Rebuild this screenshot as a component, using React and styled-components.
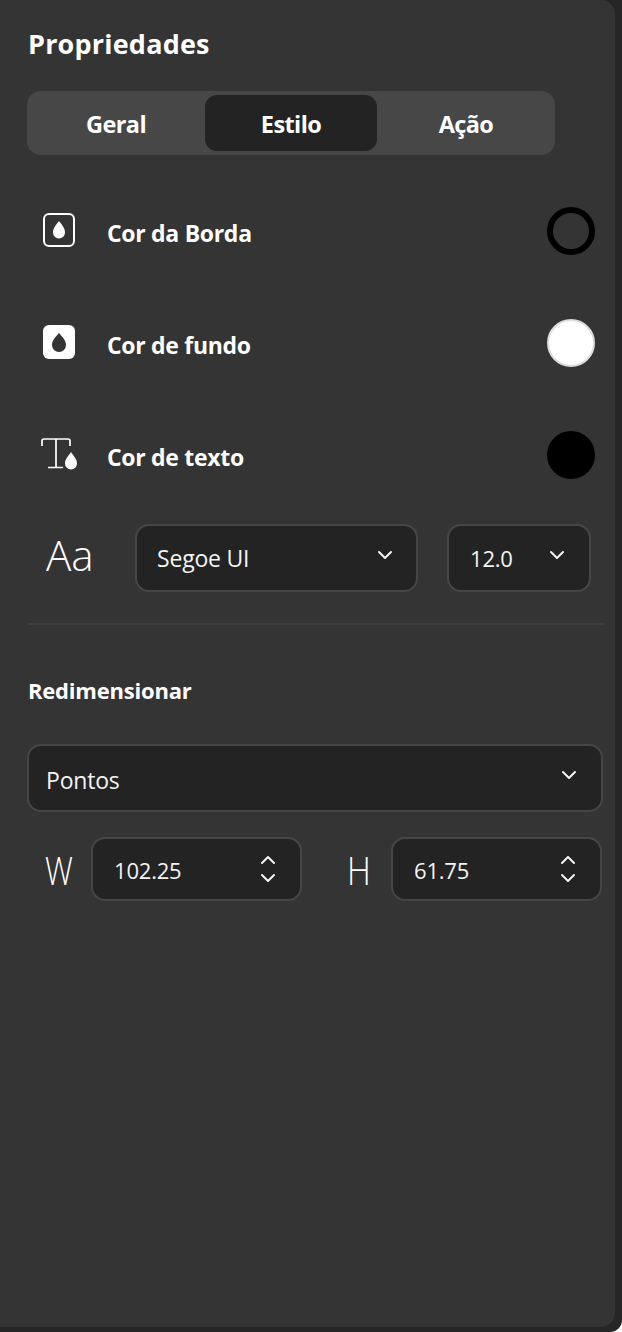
import React from "react";
import styled, { createGlobalStyle } from "styled-components";

const GlobalStyle = createGlobalStyle`
  html, body {
    margin: 0;
    padding: 0;
    background: #fff;
  }
  body {
    width: 622px;
    height: 1332px;
    overflow: hidden;
    font-family: "Open Sans", "Noto Sans", sans-serif;
    color: #fff;
  }
`;

const Frame = styled.div`
  width: 622px;
  height: 1332px;
  background: #262626;
  border-bottom-right-radius: 12px;
`;

const Panel = styled.div`
  box-sizing: border-box;
  width: 615px;
  height: 1327px;
  padding: 26px 12px 0 28px;
  background: #343434;
  border-bottom-right-radius: 14px;
  border-top-right-radius: 14px;
`;

const Title = styled.h1`
  margin: 0;
  height: 36px;
  font-size: 27px;
  line-height: 36px;
  font-weight: 700;
  letter-spacing: 0.2px;
`;

const Tabs = styled.div`
  box-sizing: border-box;
  display: flex;
  align-items: center;
  width: 528px;
  height: 64px;
  margin: 29px 0 0 -1px;
  background: #474747;
  border-radius: 14px;
`;

const Tab = styled.div`
  display: flex;
  align-items: center;
  justify-content: center;
  flex: ${(p) => p.$grow};
  height: 56px;
  padding-top: 1px;
  box-sizing: border-box;
  background: ${(p) => (p.$active ? "#232323" : "transparent")};
  border-radius: 12px;
  font-size: 23.5px;
  font-weight: 700;
  letter-spacing: -0.6px;
`;

const ColorList = styled.div`
  display: flex;
  flex-direction: column;
  gap: 64px;
  margin-top: 52px;
`;

const ColorRow = styled.div`
  display: flex;
  align-items: center;
  height: 48px;
`;

const IconSlot = styled.div`
  display: flex;
  align-items: center;
  justify-content: center;
  width: 62px;
  margin-bottom: 2px;
  svg {
    display: block;
  }
`;

const RowLabel = styled.span`
  margin-left: 17px;
  padding-top: 3px;
  flex: 1;
  font-size: 23px;
  font-weight: 700;
  letter-spacing: -0.3px;
`;

const Swatch = styled.div`
  box-sizing: border-box;
  width: 48px;
  height: 48px;
  margin-right: 8px;
  border-radius: 50%;
  background: ${(p) => p.$fill};
  border: ${(p) => p.$border};
`;

const FontRow = styled.div`
  display: flex;
  align-items: center;
  margin-top: 45px;
`;

const LightGlyph = styled.span`
  flex: none;
  width: ${(p) => p.$width}px;
  margin-left: ${(p) => p.$indent}px;
  margin-bottom: ${(p) => p.$raise || 0}px;
  font-weight: 300;
  font-size: ${(p) => p.$size}px;
  line-height: 1;
  transform: scaleX(${(p) => p.$squeeze || 1});
  transform-origin: left center;
`;

const Field = styled.div`
  box-sizing: border-box;
  display: flex;
  align-items: center;
  justify-content: space-between;
  flex: none;
  width: ${(p) => p.$width}px;
  height: ${(p) => p.$height}px;
  margin-left: ${(p) => p.$gap || 0}px;
  padding: 0 ${(p) => p.$right}px 0 ${(p) => p.$left}px;
  background: #232323;
  border: 2px solid #464646;
  border-radius: 14px;
  font-size: ${(p) => p.$size || 23}px;
  font-weight: 400;
  letter-spacing: -0.2px;
  color: #f4f4f4;
`;

const FieldText = styled.span`
  padding-top: ${(p) => p.$drop || 0}px;
`;

const WideField = styled(Field)`
  margin-top: 39px;
`;

const Divider = styled.div`
  width: 577px;
  height: 2px;
  margin-top: 31px;
  background: #3f3f3f;
`;

const SectionTitle = styled.h2`
  margin: 50px 0 0;
  height: 30px;
  font-size: 22px;
  line-height: 30px;
  font-weight: 700;
  letter-spacing: -0.2px;
`;

const SizeRow = styled.div`
  display: flex;
  align-items: center;
  margin-top: 25px;
`;

const Stepper = styled.div`
  display: flex;
  flex-direction: column;
  gap: 8px;
`;

const Chevron = styled.svg`
  display: block;
  flex: none;
  fill: none;
  stroke: #f4f4f4;
  stroke-width: 2;
  stroke-linecap: round;
  stroke-linejoin: round;
  transform: ${(p) => (p.$up ? "rotate(180deg)" : "none")};
  margin-top: ${(p) => p.$lift || 0}px;
`;

const ChevronDown = ({ up, lift }) => (
  <Chevron width="16" height="10" viewBox="0 0 16 10" $up={up} $lift={lift}>
    <path d="M2 2 L8 8 L14 2" />
  </Chevron>
);

const BorderDropIcon = () => (
  <svg width="32" height="34" viewBox="0 0 32 34">
    <rect x="1" y="1" width="30" height="32" rx="5" fill="none" stroke="#fff" strokeWidth="2" />
    <path d="M16 8 C19 12 22 15 22 19.5 A6 6 0 0 1 10 19.5 C10 15 13 12 16 8 Z" fill="#fff" />
  </svg>
);

const FillDropIcon = () => (
  <svg width="32" height="34" viewBox="0 0 32 34">
    <rect width="32" height="34" rx="6" fill="#fff" />
    <path d="M16 8 C19.5 12 23 15.5 23 20 A7 7 0 0 1 9 20 C9 15.5 12.5 12 16 8 Z" fill="#343434" />
  </svg>
);

const TextDropIcon = () => (
  <svg width="36" height="32" viewBox="0 0 36 32">
    <path
      d="M1 8 V3 Q1 1 3 1 H27 Q29 1 29 3 V8 M15 1 V29.5 M7 29.5 H22"
      fill="none"
      stroke="#fff"
      strokeWidth="1.7"
    />
    <path d="M30 14 C32.5 18 36 21 36 25.5 A6 6 0 0 1 24 25.5 C24 21 27.5 18 30 14 Z" fill="#fff" />
  </svg>
);

const colors = [
  { label: "Cor da Borda", icon: <BorderDropIcon />, fill: "transparent", border: "6px solid #000" },
  { label: "Cor de fundo", icon: <FillDropIcon />, fill: "#fff", border: "2px solid #dcdcdc" },
  { label: "Cor de texto", icon: <TextDropIcon />, fill: "#000", border: "none" },
];

export default function App() {
  return (
    <Frame>
      <GlobalStyle />
      <Panel>
        <Title>Propriedades</Title>
        <Tabs>
          <Tab $grow="178">Geral</Tab>
          <Tab $grow="172" $active>
            Estilo
          </Tab>
          <Tab $grow="178">Ação</Tab>
        </Tabs>
        <ColorList>
          {colors.map((c) => (
            <ColorRow key={c.label}>
              <IconSlot>{c.icon}</IconSlot>
              <RowLabel>{c.label}</RowLabel>
              <Swatch $fill={c.fill} $border={c.border} />
            </ColorRow>
          ))}
        </ColorList>
        <FontRow>
          <LightGlyph $size={43} $width={89} $indent={18} $squeeze={0.98} $raise={8}>
            Aa
          </LightGlyph>
          <Field $width={283} $height={68} $left={20} $right={23}>
            <FieldText>Segoe UI</FieldText>
            <ChevronDown lift={-6} />
          </Field>
          <Field $width={144} $height={68} $gap={29} $left={21} $right={24} $size={22}>
            <FieldText>12.0</FieldText>
            <ChevronDown lift={-6} />
          </Field>
        </FontRow>
        <Divider />
        <SectionTitle>Redimensionar</SectionTitle>
        <WideField $width={576} $height={68} $gap={-1} $left={17} $right={24}>
          <FieldText $drop={4}>Pontos</FieldText>
          <ChevronDown lift={-6} />
        </WideField>
        <SizeRow>
          <LightGlyph $size={39} $width={46} $indent={17} $squeeze={0.8}>
            W
          </LightGlyph>
          <Field $width={211} $height={64} $left={21} $right={24} $size={22}>
            <FieldText $drop={2}>102.25</FieldText>
            <Stepper>
              <ChevronDown up />
              <ChevronDown />
            </Stepper>
          </Field>
          <LightGlyph $size={39} $width={44} $indent={45} $squeeze={0.85}>
            H
          </LightGlyph>
          <Field $width={211} $height={64} $left={21} $right={24} $size={22}>
            <FieldText $drop={2}>61.75</FieldText>
            <Stepper>
              <ChevronDown up />
              <ChevronDown />
            </Stepper>
          </Field>
        </SizeRow>
      </Panel>
    </Frame>
  );
}
